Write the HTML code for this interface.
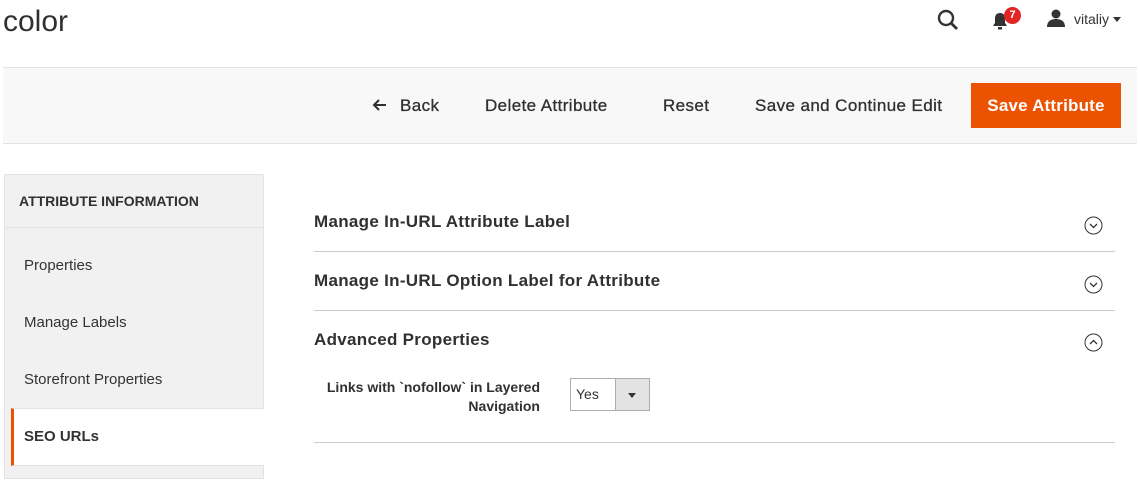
<!DOCTYPE html>
<html><head><style>
*{margin:0;padding:0;box-sizing:border-box}
body{width:1140px;height:484px;background:#fff;font-family:"Liberation Sans",sans-serif;color:#333;position:relative;overflow:hidden}
.a{position:absolute}
.t{font-size:15px;font-weight:bold;color:#303030;letter-spacing:.3px}
.btn{font-size:17px;color:#303030;top:96px;letter-spacing:.4px;-webkit-text-stroke:.3px #303030}
.side{font-size:15px;color:#333;left:24px}
.line{left:314px;width:801px;height:1px;background:#ccc}
</style></head><body>
<div class="a" style="left:3px;top:5px;font-size:30px;color:#303030">color</div>
<svg class="a" style="left:936px;top:8px" width="24" height="24" viewBox="0 0 24 24"><circle cx="10" cy="10" r="7" fill="none" stroke="#333" stroke-width="2.4"/><path d="M15 15l6 6" stroke="#333" stroke-width="2.8"/></svg>
<svg class="a" style="left:992px;top:12px" width="16" height="18" viewBox="0 0 16 18"><path d="M8 1c-3 0-5 2-5 5v5l-2 3h14l-2-3V6c0-3-2-5-5-5z" fill="#333"/><rect x="6" y="15" width="4" height="2.5" fill="#333"/></svg>
<div class="a" style="left:1004px;top:7px;width:17px;height:17px;border-radius:50%;background:#e22626;color:#fff;font-size:11px;font-weight:bold;text-align:center;line-height:17px">7</div>
<svg class="a" style="left:1046px;top:9px" width="20" height="18" viewBox="0 0 20 18"><circle cx="10" cy="5" r="4.5" fill="#333"/><path d="M1 18c0-6 4-8 9-8s9 2 9 8z" fill="#333"/></svg>
<div class="a" style="left:1074px;top:11px;font-size:14px;color:#333">vitaliy</div>
<div class="a" style="left:1113px;top:17px;border:4px solid transparent;border-top:5px solid #333;border-bottom:0"></div>
<div class="a" style="left:3px;top:67px;width:1134px;height:77px;background:#f8f8f8;border-top:1px solid #e3e3e3;border-bottom:1px solid #e3e3e3"></div>
<svg class="a" style="left:371px;top:98px" width="16" height="14" viewBox="0 0 16 14"><path d="M15 7H3M8 2L3 7l5 5" fill="none" stroke="#303030" stroke-width="2"/></svg>
<div class="a btn" style="left:400px">Back</div>
<div class="a btn" style="left:485px">Delete Attribute</div>
<div class="a btn" style="left:663px">Reset</div>
<div class="a btn" style="left:755px">Save and Continue Edit</div>
<div class="a" style="left:971px;top:83px;width:150px;height:45px;background:#eb5202;color:#fff;font-size:17px;font-weight:bold;text-align:center;line-height:45px;letter-spacing:.2px">Save Attribute</div>
<div class="a" style="left:4px;top:174px;width:260px;height:305px;background:#f1f1f1;border:1px solid #e3e3e3"></div>
<div class="a" style="left:4px;top:227px;width:260px;height:1px;background:#e3e3e3"></div>
<div class="a" style="left:19px;top:193px;font-size:14px;font-weight:bold;color:#303030">ATTRIBUTE INFORMATION</div>
<div class="a side" style="top:257px">Properties</div>
<div class="a side" style="top:314px">Manage Labels</div>
<div class="a side" style="top:371px">Storefront Properties</div>
<div class="a" style="left:11px;top:408px;width:253px;height:58px;background:#fff;border-left:3px solid #eb5202;border-top:1px solid #e3e3e3;border-bottom:1px solid #e3e3e3"></div>
<div class="a side" style="top:428px;font-weight:bold">SEO URLs</div>
<div class="a t" style="left:314px;top:212px;font-size:17px">Manage In-URL Attribute Label</div>
<div class="a line" style="top:251px"></div>
<div class="a t" style="left:314px;top:271px;font-size:17px">Manage In-URL Option Label for Attribute</div>
<div class="a line" style="top:310px"></div>
<div class="a t" style="left:314px;top:330px;font-size:17px">Advanced Properties</div>
<div class="a line" style="top:442px"></div>
<svg class="a" style="left:1084px;top:216px" width="19" height="19" viewBox="0 0 19 19"><circle cx="9.5" cy="9.5" r="8.5" fill="none" stroke="#333"/><path d="M6 8l3.5 3.5L13 8" fill="none" stroke="#333" stroke-width="1.3"/></svg>
<svg class="a" style="left:1084px;top:275px" width="19" height="19" viewBox="0 0 19 19"><circle cx="9.5" cy="9.5" r="8.5" fill="none" stroke="#333"/><path d="M6 8l3.5 3.5L13 8" fill="none" stroke="#333" stroke-width="1.3"/></svg>
<svg class="a" style="left:1084px;top:333px" width="19" height="19" viewBox="0 0 19 19"><circle cx="9.5" cy="9.5" r="8.5" fill="none" stroke="#333"/><path d="M6 11l3.5-3.5L13 11" fill="none" stroke="#333" stroke-width="1.3"/></svg>
<div class="a" style="left:300px;top:378px;width:240px;text-align:right;font-size:14px;font-weight:bold;color:#303030;line-height:19px">Links with `nofollow` in Layered Navigation</div>
<div class="a" style="left:570px;top:378px;width:80px;height:33px;border:1px solid #adadad;background:#fff"></div>
<div class="a" style="left:615px;top:379px;width:34px;height:31px;background:#e3e3e3;border-left:1px solid #adadad"></div>
<div class="a" style="left:576px;top:386px;font-size:14px;color:#333">Yes</div>
<div class="a" style="left:628px;top:393px;border:4px solid transparent;border-top:5px solid #333;border-bottom:0"></div>
</body></html>
